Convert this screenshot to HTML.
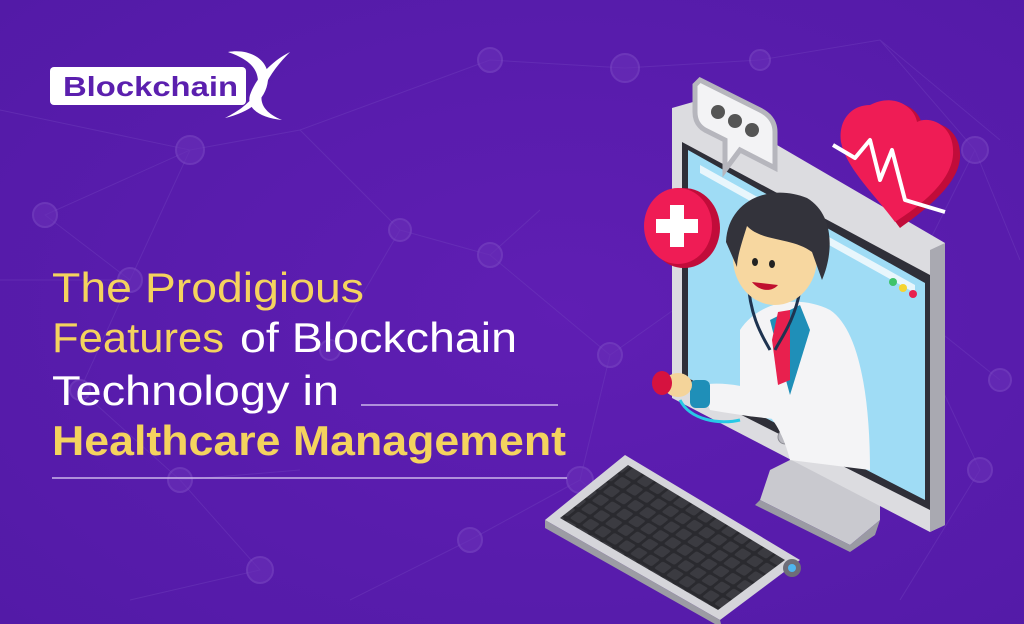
<!DOCTYPE html>
<html><head><meta charset="utf-8"><style>
html,body{margin:0;padding:0;width:1024px;height:624px;overflow:hidden;background:#5a1eac}
svg{display:block}
</style></head><body>
<svg width="1024" height="624" viewBox="0 0 1024 624" xmlns="http://www.w3.org/2000/svg">
<defs>
<radialGradient id="bg" cx="0.55" cy="0.5" r="0.8"><stop offset="0" stop-color="#5f1eb3"/><stop offset="1" stop-color="#521aa6"/></radialGradient>
<pattern id="keys" width="14" height="14" patternUnits="userSpaceOnUse" patternTransform="matrix(0.86,0.51,-0.78,0.62,0,0)"><rect width="14" height="14" fill="#2a2a2f"/><rect x="1.5" y="1.5" width="11" height="11" rx="2" fill="#3b3b41"/></pattern>
</defs>
<rect width="1024" height="624" fill="url(#bg)"/>
<!-- network -->
<g stroke="#7444bd" stroke-width="1" fill="none" opacity="0.4">
<path d="M0,110 L190,150 L300,130 L490,60 L625,68 L760,60 L880,40 L1000,140 M190,150 L130,280 L0,280 M190,150 L45,215 L130,280 L80,390 M300,130 L400,230 L490,255 L540,210 M400,230 L330,350 M490,255 L610,355 L730,270 M880,40 L975,150 L1020,260 M975,150 L900,300 L1000,380 M610,355 L580,480 L470,540 L350,600 M580,480 L720,600 M180,480 L260,570 L130,600 M80,390 L180,480 L300,470 M900,300 L980,470 L900,600"/>
</g>
<g fill="#6a30b8" stroke="#7a48c2" stroke-width="2" opacity="0.6">
<circle cx="190" cy="150" r="14"/><circle cx="45" cy="215" r="12"/><circle cx="490" cy="60" r="12"/><circle cx="625" cy="68" r="14"/><circle cx="400" cy="230" r="11"/><circle cx="490" cy="255" r="12"/><circle cx="130" cy="280" r="12"/><circle cx="975" cy="150" r="13"/><circle cx="610" cy="355" r="12"/><circle cx="580" cy="480" r="13"/><circle cx="470" cy="540" r="12"/><circle cx="180" cy="480" r="12"/><circle cx="260" cy="570" r="13"/><circle cx="980" cy="470" r="12"/><circle cx="1000" cy="380" r="11"/><circle cx="330" cy="350" r="10"/><circle cx="80" cy="390" r="10"/><circle cx="760" cy="60" r="10"/>
</g>
<!-- logo -->
<rect x="50" y="67" width="196" height="38" rx="4" fill="#fff"/>
<text x="63" y="96" font-family="Liberation Sans, sans-serif" font-weight="bold" font-size="28" fill="#5b1fae" textLength="175" lengthAdjust="spacingAndGlyphs">Blockchain</text>
<path d="M228,52 C250,48 270,60 268,80 C266,100 250,112 225,118 C245,108 258,96 258,82 C258,66 245,58 228,52Z" fill="#fff"/>
<path d="M290,52 C270,62 255,80 250,95 C246,108 260,118 282,120 C262,112 258,100 264,88 C270,74 280,62 290,52Z" fill="#fff"/>
<!-- title text -->
<g font-family="Liberation Sans, sans-serif" font-size="42">
<text x="52" y="302" fill="#f4d35e" textLength="312" lengthAdjust="spacingAndGlyphs">The Prodigious</text>
<text x="52" y="352" fill="#f4d35e" textLength="172" lengthAdjust="spacingAndGlyphs">Features</text>
<text x="240" y="352" fill="#fff" textLength="277" lengthAdjust="spacingAndGlyphs">of Blockchain</text>
<text x="52" y="405" fill="#fff" textLength="287" lengthAdjust="spacingAndGlyphs">Technology in</text>
<text x="52" y="455" fill="#f4d35e" font-weight="bold" textLength="514" lengthAdjust="spacingAndGlyphs">Healthcare Management</text>
</g>
<line x1="361" y1="405" x2="558" y2="405" stroke="#cbb6ea" stroke-width="1.5"/>
<line x1="52" y1="478" x2="567" y2="478" stroke="#cbb6ea" stroke-width="1.5"/>
<!-- monitor stand -->
<polygon points="770,470 830,440 880,470 880,520 850,545 760,500" fill="#c9c9cf"/>
<polygon points="760,500 850,545 880,520 875,535 850,552 755,505" fill="#9a9aa3"/>
<!-- monitor frame -->
<polygon points="672,108 700,100 945,243 945,525 930,532 672,398" fill="#dcdce0"/>
<polygon points="930,250 945,243 945,525 930,532" fill="#a9a9b1"/>
<polygon points="682,142 930,275 930,510 682,385" fill="#2f2f38"/>
<polygon points="688,150 925,283 925,500 688,378" fill="#9fdcf5"/>
<polygon points="700,165 915,285 915,293 700,173" fill="#e8f6fc"/>
<circle cx="893" cy="282" r="4" fill="#3ec36a"/><circle cx="903" cy="288" r="4" fill="#f5d430"/><circle cx="913" cy="294" r="4" fill="#e8204e"/>
<circle cx="785" cy="437" r="7" fill="#b9b9c0" stroke="#8a8a92"/>
<!-- doctor body -->
<path d="M740,330 C760,300 800,295 830,310 C860,330 870,400 870,470 L790,460 C780,420 760,400 740,400 Z" fill="#f4f4f6"/>
<path d="M770,320 L800,305 L810,330 L790,395 L775,340Z" fill="#1f8fb8"/>
<path d="M778,312 L790,310 L790,380 L778,385 L772,340Z" fill="#e8204e"/>
<path d="M700,385 C730,380 760,390 790,400 L800,420 C770,420 740,415 710,410Z" fill="#f4f4f6"/>
<rect x="690" y="380" width="20" height="28" rx="6" fill="#1f8fb8"/>
<ellipse cx="678" cy="385" rx="14" ry="12" fill="#f4d49a"/>
<ellipse cx="662" cy="383" rx="10" ry="12" fill="#d6123f"/>
<path d="M680,400 C690,420 720,425 740,420" stroke="#28c9e6" stroke-width="3" fill="none"/>
<path d="M748,280 C750,320 765,340 770,350 M800,290 C795,320 780,340 775,350" stroke="#1e3350" stroke-width="3" fill="none"/>
<!-- head -->
<ellipse cx="775" cy="258" rx="42" ry="47" fill="#f7d7a0"/>
<path d="M726,242 C728,200 770,183 807,198 C834,214 834,252 822,280 L812,252 C792,237 762,242 747,226 C742,242 737,257 737,267 Z" fill="#33333b"/>
<ellipse cx="755" cy="262" rx="3" ry="4" fill="#222"/><ellipse cx="772" cy="264" rx="3" ry="4" fill="#222"/>
<path d="M752,282 C760,292 772,292 778,285 Z" fill="#c0102f"/>
<!-- cross badge -->
<ellipse cx="684" cy="228" rx="36" ry="40" fill="#c10c3a"/>
<ellipse cx="678" cy="226" rx="34" ry="38" fill="#ef1c55"/>
<path d="M670,205 h14 v14 h14 v14 h-14 v14 h-14 v-14 h-14 v-14 h14z" fill="#fff"/>
<!-- chat bubble -->
<path d="M700,80 L760,110 C770,115 775,122 775,132 L775,168 L740,150 L725,170 L725,140 L705,130 C698,126 695,120 695,112 L695,85 Z" fill="#f3f3f5" stroke="#b6b6bd" stroke-width="5"/>
<circle cx="718" cy="112" r="7" fill="#555"/><circle cx="735" cy="121" r="7" fill="#555"/><circle cx="752" cy="130" r="7" fill="#555"/>
<!-- heart -->
<path d="M875,108 C900,95 920,110 922,125 C935,118 962,128 960,158 C958,185 925,210 900,228 C880,200 850,170 845,145 C842,125 855,108 875,108Z" fill="#c10c3a"/>
<path d="M870,105 C895,92 915,108 917,122 C930,115 955,125 953,155 C951,182 920,206 895,222 C875,195 846,168 841,142 C838,122 850,105 870,105Z" fill="#ef1c55"/>
<path d="M833,145 L855,158 L870,140 L880,180 L892,150 L905,200 L945,212" stroke="#fff" stroke-width="4" fill="none" stroke-linejoin="round"/>
<!-- keyboard -->
<polygon points="545,520 625,455 800,560 720,620" fill="#d5d5da"/>
<polygon points="545,520 720,620 722,628 545,528" fill="#9c9ca4"/>
<polygon points="560,518 628,465 785,560 718,610" fill="url(#keys)"/>
<circle cx="792" cy="568" r="9" fill="#6e6e78"/><circle cx="792" cy="568" r="4" fill="#4fb7f0"/>
</svg>
</body></html>
